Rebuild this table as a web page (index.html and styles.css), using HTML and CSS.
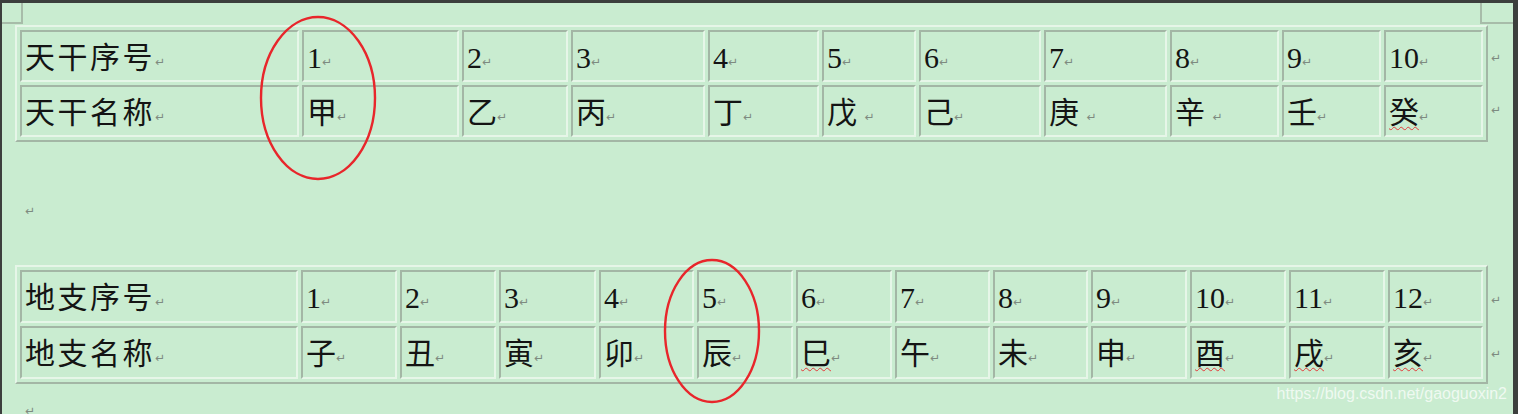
FILE: index.html
```html
<!DOCTYPE html>
<html lang="zh-CN">
<head>
    <meta charset="UTF-8">
    <title>天干地支</title>
    <link rel="stylesheet" href="styles.css">
</head>
<body>
    <div class="page">
        <div class="corner corner-left"></div>
        <div class="corner corner-right"></div>

        <!-- 天干 -->
        <div class="table-block gan-block">
            <table class="doc-table gan">
                <colgroup>
                    <col><col><col><col><col><col><col><col><col><col><col>
                </colgroup>
                <tr>
                    <td class="label">天干序号<span class="ret">↵</span></td>
                    <td>1<span class="ret">↵</span></td>
                    <td>2<span class="ret">↵</span></td>
                    <td>3<span class="ret">↵</span></td>
                    <td>4<span class="ret">↵</span></td>
                    <td>5<span class="ret">↵</span></td>
                    <td>6<span class="ret">↵</span></td>
                    <td>7<span class="ret">↵</span></td>
                    <td>8<span class="ret">↵</span></td>
                    <td>9<span class="ret">↵</span></td>
                    <td>10<span class="ret">↵</span></td>
                </tr>
                <tr>
                    <td class="label">天干名称<span class="ret">↵</span></td>
                    <td>甲<span class="ret">↵</span></td>
                    <td>乙<span class="ret">↵</span></td>
                    <td>丙<span class="ret">↵</span></td>
                    <td>丁<span class="ret">↵</span></td>
                    <td>戊 <span class="ret">↵</span></td>
                    <td>己<span class="ret">↵</span></td>
                    <td>庚 <span class="ret">↵</span></td>
                    <td>辛 <span class="ret">↵</span></td>
                    <td>壬<span class="ret">↵</span></td>
                    <td><span class="typo">癸</span><span class="ret">↵</span></td>
                </tr>
            </table>
            <div class="row-ends">
                <span class="ret">↵</span>
                <span class="ret">↵</span>
            </div>
        </div>

        <div class="para gap-para"><span class="ret">↵</span></div>

        <!-- 地支 -->
        <div class="table-block zhi-block">
            <table class="doc-table zhi">
                <colgroup>
                    <col><col><col><col><col><col><col><col><col><col><col><col><col>
                </colgroup>
                <tr>
                    <td class="label">地支序号<span class="ret">↵</span></td>
                    <td>1<span class="ret">↵</span></td>
                    <td>2<span class="ret">↵</span></td>
                    <td>3<span class="ret">↵</span></td>
                    <td>4<span class="ret">↵</span></td>
                    <td>5<span class="ret">↵</span></td>
                    <td>6<span class="ret">↵</span></td>
                    <td>7<span class="ret">↵</span></td>
                    <td>8<span class="ret">↵</span></td>
                    <td>9<span class="ret">↵</span></td>
                    <td>10<span class="ret">↵</span></td>
                    <td>11<span class="ret">↵</span></td>
                    <td>12<span class="ret">↵</span></td>
                </tr>
                <tr>
                    <td class="label">地支名称<span class="ret">↵</span></td>
                    <td>子<span class="ret">↵</span></td>
                    <td>丑<span class="ret">↵</span></td>
                    <td>寅<span class="ret">↵</span></td>
                    <td>卯<span class="ret">↵</span></td>
                    <td>辰<span class="ret">↵</span></td>
                    <td><span class="typo">巳</span><span class="ret">↵</span></td>
                    <td>午<span class="ret">↵</span></td>
                    <td>未<span class="ret">↵</span></td>
                    <td>申<span class="ret">↵</span></td>
                    <td><span class="typo">酉</span><span class="ret">↵</span></td>
                    <td><span class="typo">戌</span><span class="ret">↵</span></td>
                    <td><span class="typo">亥</span><span class="ret">↵</span></td>
                </tr>
            </table>
            <div class="row-ends">
                <span class="ret">↵</span>
                <span class="ret">↵</span>
            </div>
        </div>

        <div class="para end-para"><span class="ret">↵</span></div>

        <!-- red marks drawn over the tables -->
        <svg class="marks" viewBox="0 0 1518 414" width="1518" height="414">
            <ellipse cx="318" cy="98" rx="57" ry="81" fill="none" stroke="#e8262b" stroke-width="2.4"/>
            <ellipse cx="712" cy="331" rx="47" ry="71" fill="none" stroke="#e8262b" stroke-width="2.4"/>
        </svg>

        <div class="watermark">https://blog.csdn.net/gaoguoxin2</div>
    </div>
</body>
</html>
```

FILE: styles.css
```css
/* Global */
body {
    margin: 0;
    padding: 3px 5px 0 2px;
    background-color: #3c3f3d;
    height: 414px;
    box-sizing: border-box;
    overflow: hidden;
}

/* Word page */
.page {
    position: relative;
    height: 411px;
    background-color: #c9ecd0;
    padding: 22px 0 0 13px;
    box-sizing: border-box;
}

.corner {
    position: absolute;
    top: 0;
    height: 19px;
    border-bottom: 2px solid #a7bca9;
}

.corner-left {
    left: 0;
    width: 19px;
    border-right: 2px solid #a7bca9;
}

.corner-right {
    right: 0;
    width: 31px;
    border-left: 2px solid #a7bca9;
}

/* Tables */
.table-block {
    display: flex;
    align-items: flex-start;
}

.doc-table {
    table-layout: fixed;
    width: 1473px;
    border-collapse: separate;
    border-spacing: 3px;
    border: 2px solid;
    border-color: #e6f6e8 #a3b6a5 #a3b6a5 #e6f6e8;
    font-family: "Liberation Serif", "Noto Sans CJK SC", serif;
    font-size: 30px;
    color: #141414;
}

.doc-table td {
    box-sizing: border-box;
    height: 52px;
    padding: 3px 0 0 3px;
    line-height: 34px;
    border: 2px solid;
    border-color: #a3b6a5 #e6f6e8 #e6f6e8 #a3b6a5;
    white-space: nowrap;
    vertical-align: middle;
}

.zhi td {
    height: 53px;
}

.doc-table td.label {
    letter-spacing: 2.5px;
}

.gan col:nth-child(1) { width: 279px; }
.gan col:nth-child(2) { width: 157px; }
.gan col:nth-child(3) { width: 106px; }
.gan col:nth-child(4) { width: 134px; }
.gan col:nth-child(5) { width: 111px; }
.gan col:nth-child(6) { width: 94px; }
.gan col:nth-child(7) { width: 122px; }
.gan col:nth-child(8) { width: 123px; }
.gan col:nth-child(9) { width: 109px; }
.gan col:nth-child(10) { width: 99px; }
.gan col:nth-child(11) { width: 99px; }

.zhi col { width: 96px; }
.zhi col:nth-child(1) { width: 278px; }
.zhi col:nth-child(4) { width: 97px; }
.zhi col:nth-child(5),
.zhi col:nth-child(8),
.zhi col:nth-child(9),
.zhi col:nth-child(13) { width: 95px; }

/* Paragraph marks */
.ret {
    font-family: "DejaVu Sans", sans-serif;
    font-size: 12px;
    letter-spacing: 0;
    color: #7e8a80;
    vertical-align: 2px;
    line-height: 12px;
}

.typo {
    text-decoration: underline wavy #e23b3b;
    text-decoration-thickness: 1px;
    text-underline-offset: 3px;
}

.row-ends {
    display: flex;
    flex-direction: column;
    gap: 40px;
    padding: 27px 0 0 3px;
}

.zhi-block .row-ends {
    gap: 42px;
    padding-top: 29px;
}

.para {
    box-sizing: border-box;
    padding-left: 10px;
}

.gap-para {
    height: 123px;
    padding-top: 61px;
}

.end-para {
    padding-top: 19px;
}

/* Overlays */
.marks {
    position: absolute;
    left: -2px;
    top: -3px;
    pointer-events: none;
}

.watermark {
    position: absolute;
    right: 6px;
    top: 383px;
    font-family: "Liberation Sans", Arial, sans-serif;
    font-size: 16px;
    line-height: 16px;
    color: rgba(255, 255, 255, 0.72);
}
```
